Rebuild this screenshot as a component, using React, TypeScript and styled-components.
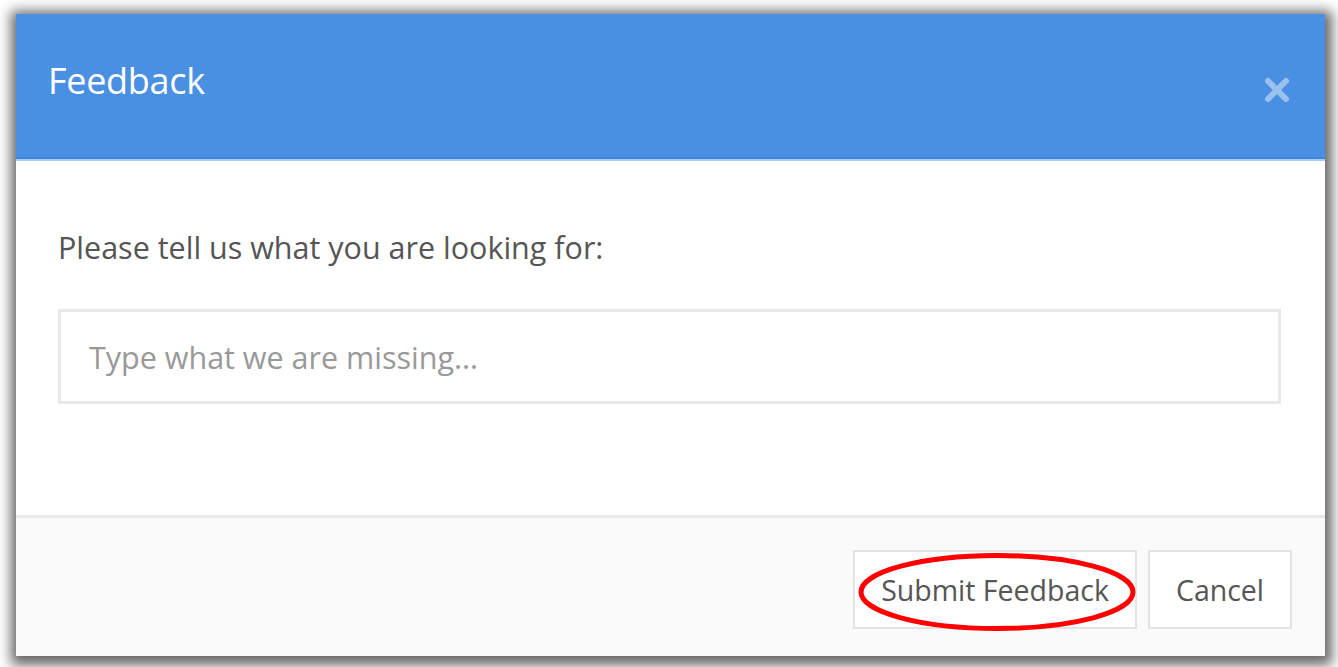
import React from 'react';
import styled, { createGlobalStyle } from 'styled-components';

const GlobalStyle = createGlobalStyle`
  html, body {
    margin: 0;
    padding: 0;
    background: #ffffff;
  }
  body {
    font-family: 'Open Sans', 'Noto Sans', sans-serif;
  }
`;

const Page = styled.div`
  width: 1338px;
  height: 667px;
  box-sizing: border-box;
  padding: 14px 13px 11px 16px;
  overflow: hidden;
`;

const Modal = styled.div`
  display: flex;
  flex-direction: column;
  height: 100%;
  background: #ffffff;
  box-shadow: 1px 3px 12px 6px rgba(0, 0, 0, 0.6);
`;

const Header = styled.div`
  display: flex;
  align-items: center;
  justify-content: space-between;
  height: 145px;
  box-sizing: border-box;
  padding: 0 35px 0 32px;
  background: #4a90e2;
  border-bottom: 2px solid #3f86de;
  box-shadow: 0 2px 0 #a9cdf3;
`;

const Title = styled.h2`
  margin: 0 0 10px;
  font-size: 36px;
  font-weight: 400;
  color: #ffffff;
  letter-spacing: -0.3px;
`;

const Close = styled.button`
  display: flex;
  margin-top: 8px;
  padding: 0;
  border: 0;
  background: transparent;
  cursor: pointer;
`;

const Body = styled.div`
  flex: 1;
  padding: 68px 44px 0 42px;
`;

const Label = styled.p`
  margin: 0 0 42px;
  font-size: 30.5px;
  line-height: 40px;
  color: #555555;
`;

const Input = styled.input`
  display: block;
  width: 100%;
  height: 95px;
  box-sizing: border-box;
  padding: 0 28px;
  border: 3px solid #e8e8e8;
  font-family: inherit;
  font-size: 30.5px;
  color: #555555;
  outline: none;
  &::placeholder {
    color: #999999;
  }
`;

const Footer = styled.div`
  display: flex;
  justify-content: flex-end;
  gap: 11px;
  height: 141px;
  box-sizing: border-box;
  padding: 32px 33px 0 0;
  background: #fafafa;
  border-top: 3px solid #e8e8e8;
`;

const Button = styled.button<{ width: number }>`
  position: relative;
  width: ${({ width }) => width}px;
  height: 79px;
  padding: 0;
  background: #ffffff;
  border: 2px solid #e3e3e3;
  font-family: inherit;
  font-size: 28.5px;
  color: #555555;
  cursor: pointer;
`;

const Highlight = styled.svg`
  position: absolute;
  left: 2px;
  top: 0;
  pointer-events: none;
`;

const App = () => (
  <>
    <GlobalStyle />
    <Page>
      <Modal>
        <Header>
          <Title>Feedback</Title>
          <Close aria-label="Close">
            <svg width="26" height="26" viewBox="0 0 26 26">
              <path d="M4 4 L22 22 M22 4 L4 22" stroke="rgba(255,255,255,0.45)" strokeWidth="6" strokeLinecap="round" />
            </svg>
          </Close>
        </Header>
        <Body>
          <Label>Please tell us what you are looking for:</Label>
          <Input placeholder="Type what we are missing..." />
        </Body>
        <Footer>
          <Button width={284}>
            Submit Feedback
            <Highlight width="280" height="79" viewBox="0 0 280 79">
              <ellipse cx="140" cy="40" rx="136" ry="36.5" fill="none" stroke="#ff0000" strokeWidth="5" />
            </Highlight>
          </Button>
          <Button width={144}>Cancel</Button>
        </Footer>
      </Modal>
    </Page>
  </>
);

export default App;
